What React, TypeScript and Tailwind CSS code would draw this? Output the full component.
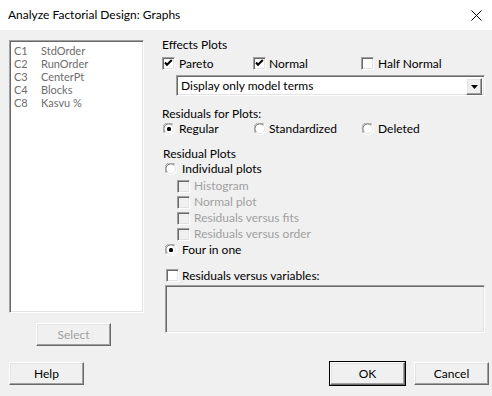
import React from 'react';

const sunken =
  'border-t border-l border-t-[#a0a0a0] border-l-[#a0a0a0] border-b border-r border-b-white border-r-white shadow-[inset_1px_1px_0_#696969,inset_-1px_-1px_0_#e3e3e3]';

const raised =
  'border-t border-l border-t-white border-l-white border-b border-r border-b-[#696969] border-r-[#696969] shadow-[inset_-1px_-1px_0_#a0a0a0,inset_1px_1px_0_#e3e3e3]';

function CheckBox({ checked = false, disabled = false }: { checked?: boolean; disabled?: boolean }) {
  return (
    <span
      className={`relative inline-block h-[13px] w-[13px] shrink-0 ${sunken} ${disabled ? 'bg-[#f0f0f0]' : 'bg-white'}`}
    >
      {checked && (
        <svg className="absolute left-0 top-0" width="11" height="11" viewBox="0 0 11 11">
          <path d="M2 4.5 L4 6.8 L8.8 2" fill="none" stroke="#000" strokeWidth="2" />
        </svg>
      )}
    </span>
  );
}

function Radio({ checked = false }: { checked?: boolean }) {
  return (
    <svg width="12" height="12" viewBox="0 0 12 12" className="shrink-0">
      <circle cx="6" cy="6" r="5.5" fill="#fff" />
      <path d="M1.4 10.1 A5.5 5.5 0 0 1 10.1 1.4" fill="none" stroke="#a0a0a0" strokeWidth="1" />
      <path d="M2.3 9.2 A4.4 4.4 0 0 1 9.2 2.3" fill="none" stroke="#696969" strokeWidth="1" />
      <path d="M10.1 1.4 A5.5 5.5 0 0 1 1.4 10.1" fill="none" stroke="#fff" strokeWidth="1" />
      <path d="M9.2 2.3 A4.4 4.4 0 0 1 2.3 9.2" fill="none" stroke="#e3e3e3" strokeWidth="1" />
      {checked && <rect x="4" y="4" width="4" height="4" rx="1.5" fill="#000" />}
    </svg>
  );
}

function Button({ label, disabled = false, primary = false, className = '' }: { label: string; disabled?: boolean; primary?: boolean; className?: string }) {
  return (
    <div
      className={`flex h-[23px] w-[75px] items-center justify-center bg-[#f0f0f0] ${
        primary ? 'outline outline-1 outline-[#000]' : ''
      } ${raised} ${disabled ? 'text-[#a0a0a0]' : 'text-black'} ${className}`}
    >
      {label}
    </div>
  );
}

const columns = [
  ['C1', 'StdOrder'],
  ['C2', 'RunOrder'],
  ['C3', 'CenterPt'],
  ['C4', 'Blocks'],
  ['C8', 'Kasvu %'],
];

const subPlots = ['Histogram', 'Normal plot', 'Residuals versus fits', 'Residuals versus order'];

export default function App() {
  return (
    <div
      className="flex h-[396px] w-[492px] flex-col overflow-hidden bg-[#f0f0f0] text-[12px] leading-[14px] text-black"
      style={{ fontFamily: 'Lato, "Liberation Sans", sans-serif' }}
    >
      {/* title bar */}
      <div className="flex h-[30px] shrink-0 items-center justify-between bg-white pl-[8px] pr-[10px]">
        <span className="text-[12px]">Analyze Factorial Design: Graphs</span>
        <svg width="11" height="11" viewBox="0 0 11 11">
          <path d="M0.5 0.5 L10.5 10.5 M10.5 0.5 L0.5 10.5" stroke="#000" strokeWidth="1" />
        </svg>
      </div>

      <div className="flex pt-[8px]">
        {/* variables list */}
        <div className="ml-[9px] mt-[2px] flex w-[135px] flex-col">
          <div className={`h-[273px] w-[135px] bg-white pl-[4px] pt-[3px] text-[11px] text-[#6d6d6d] ${sunken}`}>
            {columns.map(([c, name]) => (
              <div key={c} className="flex h-[13px] items-center leading-[13px]">
                <span className="w-[27px]">{c}</span>
                <span>{name}</span>
              </div>
            ))}
          </div>
          <Button label="Select" disabled className="ml-[27px] mt-[10px]" />
        </div>

        {/* options */}
        <div className="ml-[18px] flex w-[323px] flex-col">
          <div className="flex h-[14px] items-center">Effects Plots</div>
          <div className="mt-[4px] flex h-[15px] items-center">
            <div className="flex w-[91px] items-center gap-[4px]">
              <CheckBox checked />
              <span>Pareto</span>
            </div>
            <div className="flex w-[108px] items-center gap-[3px]">
              <CheckBox checked />
              <span>Normal</span>
            </div>
            <div className="flex items-center gap-[4px]">
              <CheckBox />
              <span>Half Normal</span>
            </div>
          </div>
          <div className={`relative ml-[14px] mt-[4px] flex h-[21px] w-[309px] items-center bg-white pl-[4px] ${sunken}`}>
            <span>Display only model terms</span>
            <div className={`absolute right-[2px] top-[2px] flex h-[17px] w-[16px] items-center justify-center bg-[#f0f0f0] ${raised}`}>
              <svg width="7" height="4" viewBox="0 0 7 4">
                <path d="M0 0 H7 L3.5 4 Z" fill="#000" />
              </svg>
            </div>
          </div>

          <div className="mt-[11px] flex h-[14px] items-center">Residuals for Plots:</div>
          <div className="mt-[1px] flex h-[14px] items-center">
            <div className="ml-[1px] flex w-[91px] items-center gap-[4px]">
              <Radio checked />
              <span>Regular</span>
            </div>
            <div className="flex w-[108px] items-center gap-[3px]">
              <Radio />
              <span>Standardized</span>
            </div>
            <div className="flex items-center gap-[4px]">
              <Radio />
              <span>Deleted</span>
            </div>
          </div>

          <div className="ml-[1px] mt-[11px] flex h-[14px] items-center">Residual Plots</div>
          <div className="ml-[3px] mt-[1px] flex h-[14px] items-center gap-[5px]">
            <Radio />
            <span>Individual plots</span>
          </div>
          <div className="ml-[15px] mt-[2px] flex flex-col text-[#a0a0a0]">
            {subPlots.map((p) => (
              <div key={p} className="flex h-[16px] items-center gap-[4px]">
                <CheckBox disabled />
                <span>{p}</span>
              </div>
            ))}
          </div>
          <div className="ml-[3px] mt-[1px] flex h-[14px] items-center gap-[5px]">
            <Radio checked />
            <span>Four in one</span>
          </div>
          <div className="ml-[4px] mt-[11px] flex h-[15px] items-center gap-[3px]">
            <CheckBox />
            <span>Residuals versus variables:</span>
          </div>
          <div className={`ml-[3px] mt-[2px] h-[48px] w-[320px] bg-[#f0f0f0] ${sunken}`} />
        </div>
      </div>

      {/* dialog buttons */}
      <div className="mt-auto flex items-center pb-[11px]">
        <Button label="Help" className="ml-[9px]" />
        <div className="flex-1" />
        <Button label="OK" primary />
        <Button label="Cancel" className="ml-[9px] mr-[3px]" />
      </div>
    </div>
  );
}
